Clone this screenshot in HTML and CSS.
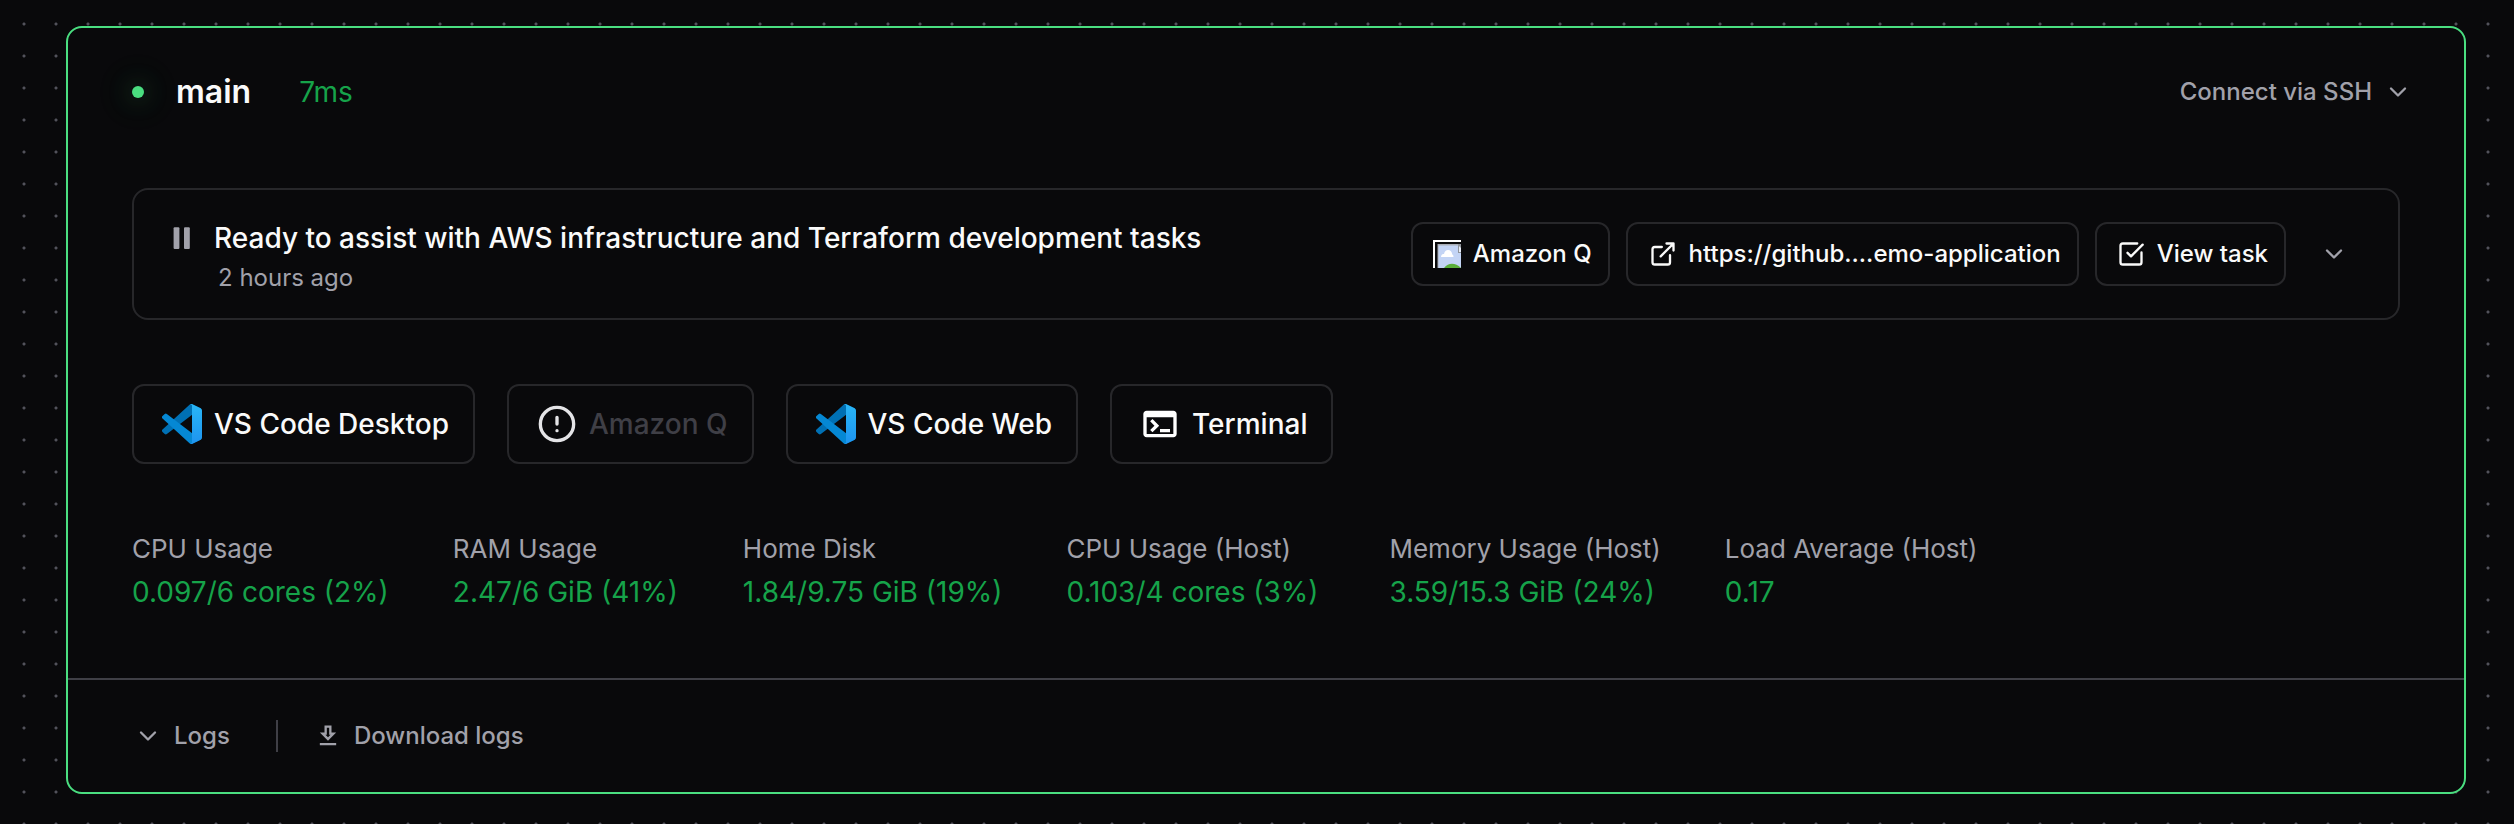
FILE: index.html
```html
<!DOCTYPE html>
<html lang="en">
<head>
<meta charset="utf-8">
<title>Workspace agent</title>
<link rel="stylesheet" href="styles.css">
</head>
<body>
<svg class="defs" aria-hidden="true">
  <defs>
    <linearGradient id="vs-right" x1="0" y1="0" x2="0" y2="1"><stop offset="0" stop-color="#29b6f6"/><stop offset="1" stop-color="#1e94f0"/></linearGradient>
  </defs>
  <symbol id="vscode" viewBox="0 0 100 100">
    <path fill="#0070b4" d="M96.46 10.8 75.86.88A6.25 6.25 0 0 0 68.75 2.08L1.3 63.58a4.17 4.17 0 0 0 0 6.17l5.51 5a4.17 4.17 0 0 0 5.32.24L93.36 13.37A4.15 4.15 0 0 1 100 16.67v-.24a6.25 6.25 0 0 0-3.54-5.63Z"/>
    <path fill="#0588d4" d="m96.46 89.2-20.6 9.92a6.25 6.25 0 0 1-7.11-1.2L1.3 36.42a4.17 4.17 0 0 1 0-6.17l5.51-5a4.17 4.17 0 0 1 5.32-.24l81.23 61.62A4.15 4.15 0 0 0 100 83.33v.24a6.25 6.25 0 0 1-3.54 5.63Z"/>
    <path fill="url(#vs-right)" d="M75.86 99.13a6.25 6.25 0 0 1-7.11-1.21c2.31 2.3 6.25.67 6.25-2.59V4.67c0-3.26-3.94-4.89-6.25-2.59A6.25 6.25 0 0 1 75.86.87l20.6 9.91A6.25 6.25 0 0 1 100 16.41v67.18a6.25 6.25 0 0 1-3.54 5.63Z"/>
  </symbol>
  <symbol id="chevron" viewBox="0 0 24 24"><path d="m6 9 6 6 6-6" fill="none" stroke="currentColor" stroke-width="2" stroke-linecap="round" stroke-linejoin="round"/></symbol>
</svg>
<main class="agent">
  <header class="head">
    <span class="dot"></span>
    <h1 class="name">main</h1>
    <span class="latency">7ms</span>
    <button class="ssh"><span class="label">Connect via SSH</span><svg class="chev"><use href="#chevron"/></svg></button>
  </header>

  <div class="body">
    <section class="status">
      <svg class="pause" viewBox="0 0 24 24"><rect x="3.6" y="2.2" width="5.8" height="21.8" rx="1"/><rect x="14" y="2.2" width="5.8" height="21.8" rx="1"/></svg>
      <div class="message">
        <p class="title">Ready to assist with AWS infrastructure and Terraform development tasks</p>
        <time class="time">2 hours ago</time>
      </div>
      <div class="actions">
        <a class="btn">
          <svg class="ic" viewBox="0 0 28 28">
            <path d="M1 28V1h27" fill="none" stroke="#fff" stroke-width="2"/>
            <path d="M4.500 4H28v24H4.500z" fill="#a9adb5"/>
            <path d="M5.500 5.500H28V28H5.500z" fill="#c3d4f5"/>
            <path d="M25 4h3v9h-3z" fill="#8f949b"/><path d="M26 6l2 2v4h-2z" fill="#e8edf8"/>
            <path d="M8 17c0-2 1.200-3 3-3 .5-2.500 2-4 4-4 2.500 0 4 2 4.300 4.500.8.3 1.200 1.200 1.200 2.500z" fill="#fff"/>
            <path d="M11 28c2.500-2.800 5-4.200 8-4.200s6 1.400 9 4.200z" fill="#5aae3a"/>
          </svg>
          <span class="label">Amazon Q</span>
        </a>
        <a class="btn link">
          <svg class="ic line" viewBox="0 0 24 24"><path d="M15 3h6v6M10 14 21 3M18 13v6a2 2 0 0 1-2 2H5a2 2 0 0 1-2-2V8a2 2 0 0 1 2-2h6"/></svg>
          <span class="label">https://github....emo-application</span>
        </a>
        <a class="btn">
          <svg class="ic line" viewBox="0 0 24 24"><path d="M21 10.656V19a2 2 0 0 1-2 2H5a2 2 0 0 1-2-2V5a2 2 0 0 1 2-2h12.344M9 11l3 3L22 4"/></svg>
          <span class="label">View task</span>
        </a>
        <button class="toggle"><svg class="chev"><use href="#chevron"/></svg></button>
      </div>
    </section>

    <nav class="apps">
      <a class="app"><svg class="app-ic"><use href="#vscode"/></svg>VS Code Desktop</a>
      <a class="app off"><svg class="app-ic line warn" viewBox="0 0 24 24"><circle cx="12" cy="12" r="10"/><path d="M12 8v4M12 16h.01"/></svg>Amazon Q</a>
      <a class="app"><svg class="app-ic"><use href="#vscode"/></svg>VS Code Web</a>
      <a class="app"><svg class="app-ic" viewBox="0 0 24 24"><path fill="#fff" d="M20 4H4c-1.110 0-2 .9-2 2v12c0 1.100.89 2 2 2h16c1.100 0 2-.9 2-2V6c0-1.100-.89-2-2-2zm0 14H4V8h16v10zm-2-1h-6v-2h6v2zM7.500 17l-1.410-1.410L8.670 13l-2.590-2.590L7.500 9l4 4-4 4z"/></svg>Terminal</a>
    </nav>

    <dl class="stats">
      <div class="stat"><dt>CPU Usage</dt><dd>0.097/6 cores (2%)</dd></div>
      <div class="stat ram"><dt>RAM Usage</dt><dd>2.47/6 GiB (41%)</dd></div>
      <div class="stat"><dt>Home Disk</dt><dd>1.84/9.75 GiB (19%)</dd></div>
      <div class="stat host-cpu"><dt>CPU Usage (Host)</dt><dd>0.103/4 cores (3%)</dd></div>
      <div class="stat"><dt>Memory Usage (Host)</dt><dd>3.59/15.3 GiB (24%)</dd></div>
      <div class="stat"><dt>Load Average (Host)</dt><dd>0.17</dd></div>
    </dl>
  </div>

  <footer class="foot">
    <button class="log"><svg class="chev"><use href="#chevron"/></svg><span class="label">Logs</span></button>
    <span class="rule"></span>
    <button class="log"><svg class="dl" viewBox="0 0 24 24"><path fill="currentColor" d="M19 9h-4V3H9v6H5l7 7 7-7zm-8 2V5h2v6h1.170L12 13.170 9.830 11H11zm-6 7h14v2H5z"/></svg><span class="label">Download logs</span></button>
  </footer>
</main>
</body>
</html>
```
FILE: styles.css
```css
* { box-sizing: border-box; margin: 0; padding: 0; }

body {
  height: 824px;
  overflow: hidden;
  padding: 26px 48px 30px 66px;
  background-color: #09090b;
  background-image: radial-gradient(circle at 16px 16px, #52525b 1px, transparent 2px);
  background-size: 32px 32px;
  background-position: 8px 8px;
  color: #fafafa;
  font-family: Inter, sans-serif;
  font-size: 24px;
  font-weight: 500;
}

button { background: none; border: 0; font: inherit; color: inherit; }
svg { display: block; flex: none; }
.defs { position: absolute; width: 0; height: 0; }

.agent {
  display: flex;
  flex-direction: column;
  width: 2400px;
  height: 768px;
  border: 2px solid #4ade80;
  border-radius: 16px;
  background: #09090b;
}

.head {
  display: flex;
  align-items: center;
  height: 128px;
  padding: 0 52px 0 64px;
}
.dot {
  width: 12px;
  height: 12px;
  border-radius: 50%;
  background: #4ade80;
  box-shadow: 0 0 24px 0 rgba(74, 222, 128, .35), 0 0 40px 8px rgba(74, 222, 128, .08);
}
.name { margin-left: 32px; padding-bottom: 2px; font-size: 32px; font-weight: 600; }
.latency { margin-left: 48px; color: #16a34a; font-size: 28px; font-weight: 400; }
.ssh { display: flex; align-items: center; gap: 12px; margin-left: auto; color: #a1a1aa; }
.label { padding-bottom: 2px; }
.chev { width: 28px; height: 28px; color: #a1a1aa; }

.body { flex: 1; padding: 32px 64px 0; }

.status {
  display: flex;
  height: 132px;
  padding: 32px;
  border: 2px solid #27272a;
  border-radius: 16px;
}
.pause { width: 24px; height: 24px; margin: 3px 20px 0 4px; fill: #a1a1aa; }
.message { flex: 1; line-height: 40px; margin-top: -4px; }
.title { font-size: 28px; }
.time { display: block; padding-left: 4px; font-weight: 400; color: #a1a1aa; }
.actions { display: flex; gap: 16px; }
.btn {
  display: flex;
  align-items: center;
  gap: 12px;
  height: 64px;
  padding: 0 16px 0 20px;
  border: 2px solid #27272a;
  border-radius: 12px;
  white-space: nowrap;
}
.link { padding-left: 21px; }
.ic { width: 28px; height: 28px; }
.line { fill: none; stroke: #fafafa; stroke-width: 2; stroke-linecap: round; stroke-linejoin: round; }
.toggle { display: flex; align-items: center; justify-content: center; width: 64px; height: 64px; }

.apps { display: flex; gap: 32px; margin-top: 64px; }
.app {
  display: flex;
  align-items: center;
  gap: 12px;
  height: 80px;
  padding: 0 24px 0 28px;
  border: 2px solid #27272a;
  border-radius: 12px;
  font-size: 28px;
}
.app-ic { width: 40px; height: 40px; }
.off { color: #3f3f46; }
.warn { stroke: #e4e4e7; }

.stats { display: flex; gap: 64px; margin-top: 65px; font-weight: 400; white-space: nowrap; }
.stat dt { font-size: 26px; line-height: 40px; color: #a1a1aa; }
.stat dd { margin-top: 3px; font-size: 28px; line-height: 40px; color: #16a34a; }
.ram { min-width: 226px; }
.host-cpu { min-width: 259px; }

.foot {
  display: flex;
  align-items: center;
  height: 114px;
  padding: 0 66px;
  border-top: 2px solid #3f3f46;
  color: #a1a1aa;
}
.log { display: flex; align-items: center; gap: 12px; }
.rule { width: 2px; height: 32px; margin: 0 36px 0 46px; background: #3f3f46; }
.dl { width: 28px; height: 28px; }
```
